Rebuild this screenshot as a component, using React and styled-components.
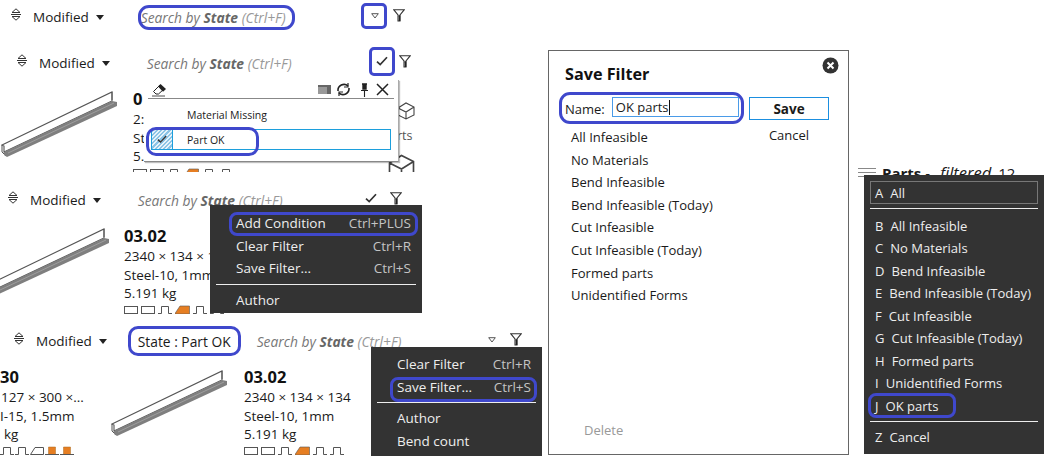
import React from "react";
import styled, { createGlobalStyle, css } from "styled-components";

const Global = createGlobalStyle`
  html, body { margin: 0; padding: 0; background: #fff; }
  body { font-family: "Open Sans", "Noto Sans", sans-serif; font-size: 13.5px; color: #1a1a1a; }
`;

const Canvas = styled.div`
  position: relative;
  width: 1046px;
  height: 456px;
  overflow: hidden;
  background: #fff;
`;

/* Each snippet is a separate clipping pasted on a free canvas. */
const Snippet = styled.section`
  position: absolute;
  left: ${(p) => p.$x}px;
  top: ${(p) => p.$y}px;
  width: ${(p) => p.$w}px;
  height: ${(p) => p.$h}px;
  overflow: hidden;
`;

const Ring = styled.div`
  position: absolute;
  left: ${(p) => p.$x}px;
  top: ${(p) => p.$y}px;
  width: ${(p) => p.$w}px;
  height: ${(p) => p.$h}px;
  box-sizing: border-box;
  border: 3px solid #3f48cc;
  border-radius: ${(p) => p.$r || 10}px;
  pointer-events: none;
  z-index: 5;
`;

const Toolbar = styled.div`
  display: flex;
  align-items: center;
  height: 28px;
  padding-left: ${(p) => p.$pad}px;
  padding-right: ${(p) => p.$right}px;
`;

const SortLabel = styled.span`
  margin-left: 12px;
  font-size: 13.5px;
  line-height: 28px;
`;

const Caret = styled.span`
  margin-left: 7px;
  width: 0;
  height: 0;
  border-left: 4px solid transparent;
  border-right: 4px solid transparent;
  border-top: 5px solid #222;
`;

const Search = styled.span`
  margin-left: ${(p) => p.$gap}px;
  font-style: italic;
  font-size: 13.8px;
  color: #777;
  white-space: nowrap;
  b { font-weight: 700; color: #666; }
  i { color: #999; }
`;

const Chip = styled.span`
  margin-left: ${(p) => p.$gap}px;
  font-size: 13.8px;
  white-space: nowrap;
`;

const Actions = styled.div`
  margin-left: auto;
  display: flex;
  align-items: center;
  gap: ${(p) => p.$gap}px;
  margin-top: -3px;
`;

const Card = styled.div`
  position: absolute;
  left: ${(p) => p.$x}px;
  top: ${(p) => p.$y}px;
  width: 180px;
`;

const PartTitle = styled.div`
  font-size: 16.5px;
  font-weight: 700;
  line-height: 22px;
  color: #111;
`;

const PartLine = styled.div`
  font-size: 13.5px;
  line-height: 18.5px;
  white-space: nowrap;
  padding-left: ${(p) => p.$indent || 0}px;
`;

const CutLabel = styled.span`
  position: absolute;
  left: 397px;
  top: 77px;
  font-size: 12.5px;
  line-height: 20px;
  color: #555;
`;

const GlyphRow = styled.div`
  display: flex;
  gap: ${(p) => p.$gap ?? 3}px;
  margin-top: 2px;
  height: 9px;
`;

const Drawing = styled.svg`
  position: absolute;
  left: ${(p) => p.$x}px;
  top: ${(p) => p.$y}px;
  display: block;
`;

const DarkMenu = styled.div`
  position: absolute;
  left: ${(p) => p.$x}px;
  top: ${(p) => p.$y}px;
  width: ${(p) => p.$w}px;
  height: ${(p) => p.$h}px;
  box-sizing: border-box;
  padding: ${(p) => p.$pad || "7px 6px"};
  background: #333333;
  color: #eee;
  overflow: hidden;
  z-index: 3;
`;

const MenuRow = styled.div`
  display: flex;
  justify-content: space-between;
  align-items: center;
  height: 22.5px;
  padding: 0 5px 0 ${(p) => p.$indent}px;
  font-size: 13.5px;
  white-space: nowrap;
  span:last-child:not(:first-child) { color: #c4c4c4; }
`;

const ListMenuRow = styled(MenuRow)`
  font-size: 13.05px;
`;

const MenuDivider = styled.hr`
  border: 0;
  height: 1px;
  background: #eee;
  margin: 4px 0 ${(p) => p.$after ?? 4}px;
`;

const Popup = styled.div`
  position: absolute;
  left: 144px;
  top: 31px;
  width: 255px;
  height: 82px;
  background: #fff;
  border-right: 1px solid #aaa;
  border-bottom: 1px solid #888;
  box-shadow: 1px 1px 1px rgba(0, 0, 0, 0.25);
  box-sizing: border-box;
  padding: 3px 7px 0 4px;
  z-index: 2;
`;

const PopupHead = styled.div`
  display: flex;
  align-items: center;
  justify-content: space-between;
  height: 16px;
  margin-right: -3px;
  box-sizing: border-box;
  padding: 0 5px 2px 4px;
  border-bottom: 1px solid #888;
`;

const HeadTools = styled.div`
  display: flex;
  align-items: center;
  gap: 5px;
`;

const PinIcon = styled.svg`
  margin: 0 2px 0 4px;
`;

const StateRow = styled.div`
  display: flex;
  align-items: center;
  height: 21px;
  margin: ${(p) => p.$margin};
  font-size: 10.5px;
  box-sizing: border-box;
  border: 1px solid ${(p) => (p.$active ? "#1c9fdc" : "transparent")};
`;

const StateCheck = styled.div`
  width: 21px;
  height: 100%;
  box-sizing: border-box;
  display: flex;
  align-items: center;
  justify-content: center;
  ${(p) =>
    p.$on &&
    css`
      border-right: 1px solid #1c9fdc;
      background: repeating-linear-gradient(135deg, #8cc4e6 0 1.5px, #e6f3fa 1.5px 3px);
    `}
`;

const StateLabel = styled.span`
  margin-left: 14px;
`;

const Dialog = styled.section`
  position: absolute;
  left: 548px;
  top: 50px;
  width: 301px;
  height: 405px;
  box-sizing: border-box;
  border: 1px solid #666;
  background: #fff;
  padding: 11px 18px 12px 16px;
  display: flex;
  flex-direction: column;
`;

const DialogTitle = styled.h2`
  margin: 0;
  font-size: 16.2px;
  line-height: 24px;
  font-weight: 700;
  color: #111;
`;

const CloseButton = styled.svg`
  position: absolute;
  right: 9px;
  top: 6px;
`;

const DialogBody = styled.div`
  display: grid;
  grid-template-columns: 174px 80px;
  column-gap: 10px;
  margin-top: 11px;
`;

const NameRow = styled.div`
  display: flex;
  align-items: center;
  height: 23px;
  font-size: 13px;
  gap: 7px;
`;

const NameInput = styled.div`
  flex: 1;
  height: 20px;
  margin-top: -3px;
  box-sizing: border-box;
  border: 1px solid #4a9be8;
  padding-left: 3px;
  font-size: 13px;
  line-height: 18px;
  display: flex;
  align-items: center;
`;

const Cursor = styled.span`
  width: 1px;
  height: 15px;
  background: #111;
`;

const SaveButton = styled.div`
  height: 23px;
  box-sizing: border-box;
  border: 1px solid #1b8fe0;
  font-size: 13.5px;
  font-weight: 700;
  display: flex;
  align-items: center;
  justify-content: center;
`;

const FilterList = styled.ul`
  list-style: none;
  margin: 6px 0 0 6px;
  padding: 0;
  font-size: 13.05px;
  line-height: 22.6px;
`;

const CancelLink = styled.div`
  font-size: 13px;
  text-align: center;
  margin-top: 6px;
`;

const DeleteLink = styled.div`
  margin-top: auto;
  margin-left: 19px;
  font-size: 13px;
  color: #999;
  padding-bottom: 3px;
`;

const ListHead = styled.div`
  position: absolute;
  left: 858px;
  top: 163px;
  display: flex;
  align-items: center;
  gap: 6px;
  font-size: 15px;
  line-height: 20px;
  white-space: nowrap;
  b { font-weight: 700; }
  i { font-weight: 400; font-size: 16.5px; margin: 0 7px 0 6px; }
`;

const Key = styled.span`
  margin-right: 7px;
`;

/* ---------- drawings ---------- */

const SortIcon = () => (
  <svg width="10" height="13" viewBox="0 0 10 13" style={{ marginTop: -5 }} fill="none" stroke="#333" strokeWidth="1">
    <path d="M1 4.5 L5 .8 L9 4.5 Z" />
    <path d="M0 6.5 H10" />
    <path d="M1 8.5 L5 12.2 L9 8.5 Z" />
  </svg>
);

const Funnel = () => (
  <svg width="12" height="13" viewBox="0 0 12 13" fill="none" stroke="#333" strokeWidth="1.1">
    <path d="M0.7 0.7 H11.3 L7 6 V12 H5 V6 Z" />
    <path d="M5.5 7 H6.5 V12" stroke="#222" strokeWidth="1.6" />
  </svg>
);

const OpenTriangle = () => (
  <svg width="8" height="6" viewBox="0 0 8 6" fill="none" stroke="#555">
    <path d="M0.7 0.7 H7.3 L4 5 Z" />
  </svg>
);

const Check = ({ size = 12 }) => (
  <svg width={size} height={size * 0.84} viewBox="0 0 12 10" fill="none" stroke="#333" strokeWidth="1.7">
    <path d="M1 5.5 L4.2 8.5 L11 1.2" />
  </svg>
);

const Part = ({ x, y }) => (
  <Drawing $x={x} $y={y} width="118" height="68" viewBox="0 0 118 68">
    <path d="M2 55 L112 2 V11 L4 62 V56 Z" fill="#fff" stroke="#555" strokeWidth="1.1" />
    <path d="M2 55 V62 L6 66 M112 2 V10" fill="none" stroke="#555" strokeWidth="1" />
    <path d="M4 62 L112 11 L117 12 V16 L7 67 L4 65 Z" fill="#7f7f7f" />
    <path d="M8 63 L114 13" stroke="#aaa" strokeWidth="0.7" />
  </Drawing>
);

const Glyph = ({ kind }) => {
  const stroke = "#555";
  if (kind === "rect")
    return (
      <svg width="14" height="9" viewBox="0 0 14 9" fill="none" stroke={stroke}>
        <rect x="0.5" y="1.5" width="13" height="7" />
      </svg>
    );
  if (kind === "bump")
    return (
      <svg width="14" height="9" viewBox="0 0 14 9" fill="none" stroke={stroke}>
        <path d="M0 8.5 H3.5 V1.5 H10.5 V8.5 H14" />
      </svg>
    );
  if (kind === "wedge")
    return (
      <svg width="14" height="9" viewBox="0 0 14 9" fill="none" stroke={stroke}>
        <path d="M0.5 8.5 L5 1.5 H13.5 V8.5 Z" />
      </svg>
    );
  if (kind === "orangeWedge")
    return (
      <svg width="15" height="9" viewBox="0 0 15 9">
        <path d="M0 8.5 L5 1 H14.5 V9 H0 Z" fill="#e67e22" stroke="#555" strokeWidth="0.6" />
      </svg>
    );
  return (
    <svg width="14" height="9" viewBox="0 0 14 9">
      <path d="M3.5 9 V1 H10.5 V9 Z" fill="#e67e22" stroke="#a86a20" strokeWidth="0.5" />
      <path d="M0 8.5 H14" stroke="#555" />
    </svg>
  );
};

const Glyphs = ({ kinds, gap }) => (
  <GlyphRow $gap={gap}>
    {kinds.map((k, i) => (
      <Glyph key={i} kind={k} />
    ))}
  </GlyphRow>
);

const PART_GLYPHS = ["rect", "rect", "bump", "orangeWedge", "bump", "bump"];

const PartInfo = ({ x, y, title = "03.02", lines = ["2340 × 134 × 134", "Steel-10, 1mm", "5.191 kg"] }) => (
  <Card $x={x} $y={y}>
    <PartTitle>{title}</PartTitle>
    {lines.map((l) => (
      <PartLine key={l}>{l}</PartLine>
    ))}
    <Glyphs kinds={PART_GLYPHS} />
  </Card>
);

const SearchText = ({ gap }) => (
  <Search $gap={gap}>
    Search by <b>State</b> <i>(Ctrl+F)</i>
  </Search>
);

const Eraser = () => (
  <svg width="15" height="14" viewBox="0 0 15 14" fill="none" stroke="#222">
    <path d="M1.5 8.5 L8 2 L12 6 L6.5 11 H4 Z" />
    <path d="M6 3.5 L8.5 1 L14 6 L11 8.8 Z" fill="#222" stroke="none" />
    <path d="M0 13 H13" strokeWidth="0.8" />
  </svg>
);

const Cube = ({ x, y, size = 18 }) => (
  <Drawing $x={x} $y={y} width={size} height={size} viewBox="0 0 18 18" fill="none" stroke="#444" strokeWidth="1.1">
    <path d="M1 6 L9 1 L17 5 V13 L9 17 L1 13 Z M1 6 L9 10 L17 5 M9 10 V17" />
  </Drawing>
);

const filters = [
  "All Infeasible",
  "No Materials",
  "Bend Infeasible",
  "Bend Infeasible (Today)",
  "Cut Infeasible",
  "Cut Infeasible (Today)",
  "Formed parts",
  "Unidentified Forms",
];

const accelerators = [
  ["B", "All Infeasible"],
  ["C", "No Materials"],
  ["D", "Bend Infeasible"],
  ["E", "Bend Infeasible (Today)"],
  ["F", "Cut Infeasible"],
  ["G", "Cut Infeasible (Today)"],
  ["H", "Formed parts"],
  ["I", "Unidentified Forms"],
  ["J", "OK parts"],
];

const SelectedRow = styled(ListMenuRow)`
  height: 23px;
  box-sizing: border-box;
  border: 1px solid #777;
  padding-left: 4px;
`;

export default function App() {
  return (
    <Canvas>
      <Global />

      {/* 1: bare toolbar */}
      <Snippet $x={0} $y={3} $w={420} $h={28}>
        <Toolbar $pad={11} $right={15}>
          <SortIcon />
          <SortLabel>Modified</SortLabel>
          <Caret />
          <SearchText gap={37} />
          <Actions $gap={14}>
            <OpenTriangle />
            <Funnel />
          </Actions>
        </Toolbar>
      </Snippet>
      <Ring $x={138} $y={5} $w={157} $h={25} $r={11} />
      <Ring $x={361} $y={3} $w={26} $h={26} $r={5} />

      {/* 2: state popup open */}
      <Snippet $x={0} $y={49} $w={420} $h={123}>
        <Toolbar $pad={17} $right={9}>
          <SortIcon />
          <SortLabel>Modified</SortLabel>
          <Caret />
          <SearchText gap={37} />
          <Actions $gap={11}>
            <Check />
            <Funnel />
          </Actions>
        </Toolbar>
        <Part x={0} y={41} />
        <PartInfo x={133} y={39} title="0" lines={["2:", "St", "5."]} />
        <Popup>
          <PopupHead>
            <Eraser />
            <HeadTools>
              <svg width="13" height="9" viewBox="0 0 13 9">
                <rect width="13" height="9" fill="#666" />
                <rect x="0" y="2" width="9" height="7" fill="#999" />
              </svg>
              <svg width="15" height="15" viewBox="0 0 15 15" fill="none" stroke="#222" strokeWidth="1.6">
                <path d="M2 9 A6 6 0 0 1 12 4 M13 6 A6 6 0 0 1 3 11" />
                <path d="M12 1 V5 H8 M3 14 V10 H7" strokeWidth="1.2" />
              </svg>
              <PinIcon width="9" height="14" viewBox="0 0 9 14" stroke="#222">
                <path d="M2 1 H7 M3 1 V6 H6 V1" fill="#222" strokeWidth="1.4" />
                <path d="M1 7.5 H8 M4.5 8 V14" strokeWidth="1.1" />
              </PinIcon>
              <svg width="13" height="13" viewBox="0 0 13 13" stroke="#222" strokeWidth="1.5">
                <path d="M1 1 L12 12 M12 1 L1 12" />
              </svg>
            </HeadTools>
          </PopupHead>
          <StateRow $margin="5px 0 0 3px">
            <StateCheck />
            <StateLabel>Material Missing</StateLabel>
          </StateRow>
          <StateRow $margin="4px 0 0 3px" $active>
            <StateCheck $on>
              <Check size={10} />
            </StateCheck>
            <StateLabel>Part OK</StateLabel>
          </StateRow>
        </Popup>
        <Cube x={397} y={53} />
        <CutLabel>rts</CutLabel>
        <Cube x={388} y={105} size={27} />
      </Snippet>
      <Ring $x={369} $y={47} $w={26} $h={29} $r={5} />
      <Ring $x={146} $y={127} $w={113} $h={29} $r={10} />

      {/* 3: filter menu, Add Condition */}
      <Snippet $x={0} $y={186} $w={430} $h={130}>
        <Toolbar $pad={8} $right={28}>
          <SortIcon />
          <SortLabel>Modified</SortLabel>
          <Caret />
          <SearchText gap={37} />
          <Actions $gap={13}>
            <Check />
            <Funnel />
          </Actions>
        </Toolbar>
        <Part x={-8} y={41} />
        <PartInfo x={124} y={39} />
        <DarkMenu $x={210} $y={19} $w={212} $h={108} $pad="7px 6px">
          <MenuRow $indent={20}><span>Add Condition</span><span>Ctrl+PLUS</span></MenuRow>
          <MenuRow $indent={20}><span>Clear Filter</span><span>Ctrl+R</span></MenuRow>
          <MenuRow $indent={20}><span>Save Filter...</span><span>Ctrl+S</span></MenuRow>
          <MenuDivider />
          <MenuRow $indent={20}><span>Author</span></MenuRow>
        </DarkMenu>
      </Snippet>
      <Ring $x={229} $y={212} $w={189} $h={24} $r={8} />

      {/* 4: filtered, Save Filter */}
      <Snippet $x={0} $y={327} $w={546} $h={129}>
        <Toolbar $pad={14} $right={24}>
          <SortIcon />
          <SortLabel>Modified</SortLabel>
          <Caret />
          <Chip $gap={31}>State : Part OK</Chip>
          <SearchText gap={26} />
          <Actions $gap={14}>
            <OpenTriangle />
            <Funnel />
          </Actions>
        </Toolbar>
        <Card $x={0} $y={39}>
          <PartTitle>30</PartTitle>
          <PartLine $indent={1}>127 × 300 ×...</PartLine>
          <PartLine>I-15, 1.5mm</PartLine>
          <PartLine $indent={4}>kg</PartLine>
          <Glyphs kinds={["bump", "bump", "wedge", "orange", "orange"]} gap={1} />
        </Card>
        <Part x={110} y={42} />
        <PartInfo x={244} y={39} />
        <DarkMenu $x={371} $y={20} $w={171} $h={109} $pad="6px 6px">
          <MenuRow $indent={20}><span>Clear Filter</span><span>Ctrl+R</span></MenuRow>
          <MenuRow $indent={20}><span>Save Filter...</span><span>Ctrl+S</span></MenuRow>
          <MenuDivider />
          <MenuRow $indent={20}><span>Author</span></MenuRow>
          <MenuRow $indent={20}><span>Bend count</span></MenuRow>
        </DarkMenu>
      </Snippet>
      <Ring $x={128} $y={326} $w={113} $h={30} $r={10} />
      <Ring $x={390} $y={377} $w={147} $h={25} $r={8} />

      {/* Save Filter dialog */}
      <Dialog>
        <DialogTitle>Save Filter</DialogTitle>
        <CloseButton width="17" height="17" viewBox="0 0 17 17">
          <circle cx="8.5" cy="8.5" r="8" fill="#333" />
          <path d="M5.5 5.5 L11.5 11.5 M11.5 5.5 L5.5 11.5" stroke="#fff" strokeWidth="2" />
        </CloseButton>
        <DialogBody>
          <div>
            <NameRow>
              <span>Name:</span>
              <NameInput>OK parts<Cursor /></NameInput>
            </NameRow>
            <FilterList>
              {filters.map((f) => (
                <li key={f}>{f}</li>
              ))}
            </FilterList>
          </div>
          <div>
            <SaveButton>Save</SaveButton>
            <CancelLink>Cancel</CancelLink>
          </div>
        </DialogBody>
        <DeleteLink>Delete</DeleteLink>
      </Dialog>
      <Ring $x={559} $y={92} $w={185} $h={32} $r={11} />

      {/* Parts list with filter menu */}
      <ListHead>
        <svg width="18" height="10" viewBox="0 0 18 10" stroke="#888">
          <path d="M0 .5 H18 M0 4.5 H18 M0 8.5 H18" />
        </svg>
        <span>
          <b>Parts</b> - <i>filtered</i>12
        </span>
      </ListHead>
      <DarkMenu $x={864} $y={175} $w={180} $h={279} $pad="6px 6px">
        <SelectedRow $indent={4}><span><Key>A</Key>All</span></SelectedRow>
        <MenuDivider $after={5.5} />
        {accelerators.map(([k, label]) => (
          <ListMenuRow key={k} $indent={5}><span><Key>{k}</Key>{label}</span></ListMenuRow>
        ))}
        <MenuDivider />
        <ListMenuRow $indent={5}><span><Key>Z</Key>Cancel</span></ListMenuRow>
      </DarkMenu>
      <Ring $x={868} $y={393} $w={88} $h={25} $r={8} />
    </Canvas>
  );
}
